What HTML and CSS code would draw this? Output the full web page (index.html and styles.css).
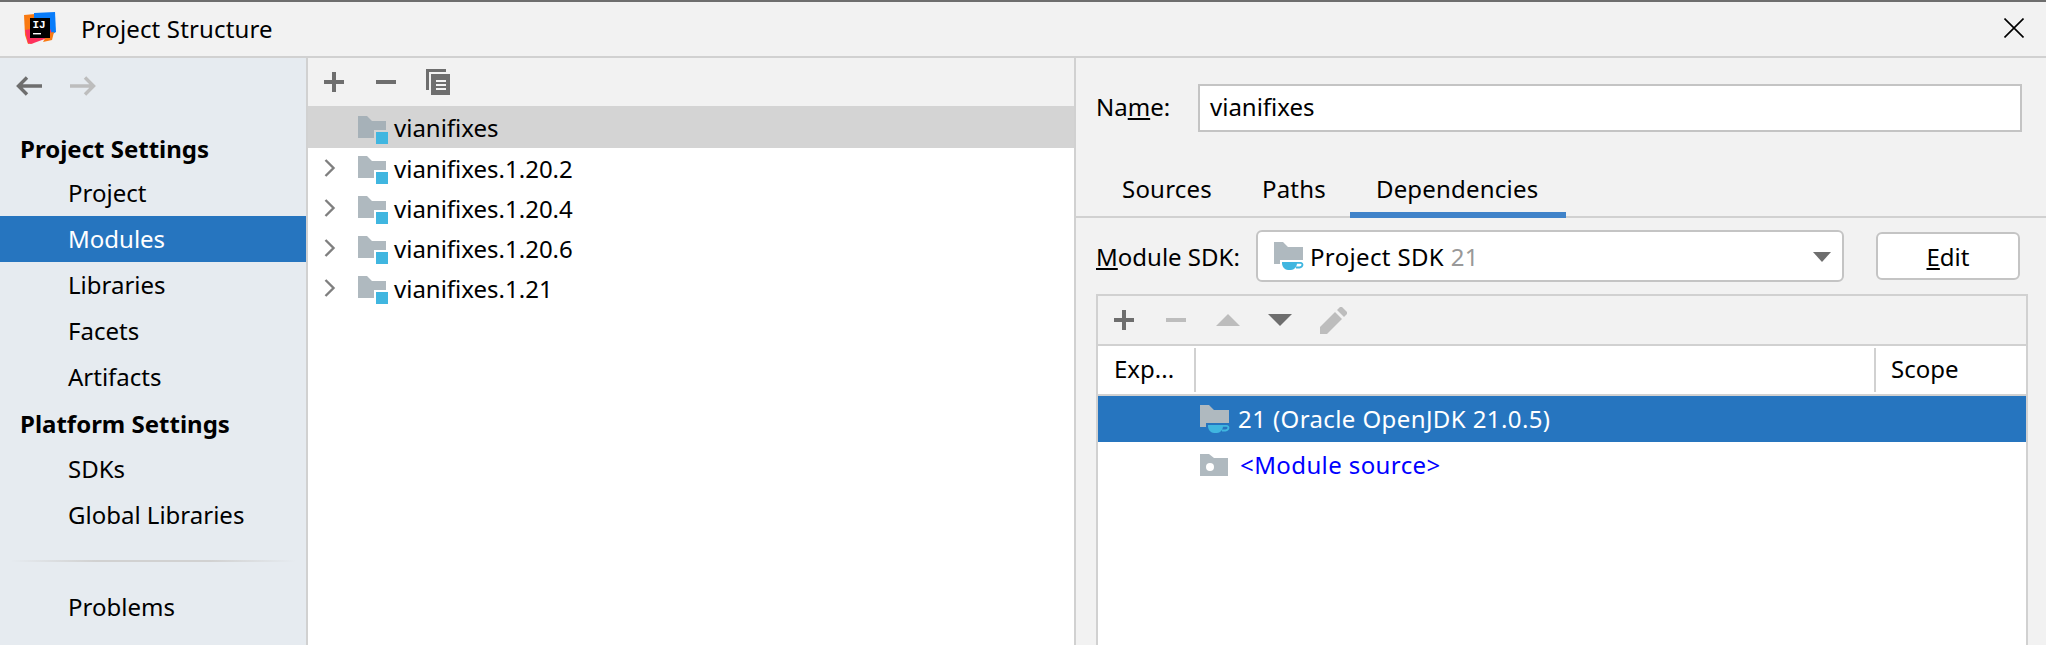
FILE: index.html
```html
<!DOCTYPE html>
<html lang="en">
<head>
<meta charset="utf-8">
<title>Project Structure</title>
<link rel="stylesheet" href="styles.css">
</head>
<body>
<svg class="defs" width="0" height="0" aria-hidden="true">
  <defs>
    <symbol id="module" viewBox="0 0 30 28">
      <path d="M0 0h9l5 5h14v9H16v8H0z"/>
      <rect x="18" y="16" width="12" height="12" fill="#40b6e0"/>
    </symbol>
    <symbol id="chevron" viewBox="0 0 12 20">
      <path d="M1.5 2l8 8-8 8" fill="none" stroke="#7f7f7f" stroke-width="2.4"/>
    </symbol>
    <symbol id="jdk" viewBox="0 0 30 28">
      <path d="M0 0h9l5 5h15v13H6v4H0z" fill="#afb9bf"/>
      <path d="M8 20h15v1c0 4-3 7-6 7h-3c-3 0-6-3-6-7z" fill="#40b6e0"/>
      <path d="M23 20.9h3.5c2.8 0 2.8 4-1 4.6h-3.5" fill="none" stroke="#40b6e0" stroke-width="1.8"/>
    </symbol>
  </defs>
</svg>
<div class="window">
  <header class="titlebar">
    <svg class="logo" width="32" height="33" viewBox="0 0 32 33">
      <path d="M0 3l11-1-1 29-6 1-3-9z" fill="#f97a12"/>
      <path d="M10 1l21-1 1 20-9 5-13-4z" fill="#087cfa"/>
      <path d="M1 18l24-4 4 10-22 8-3-1z" fill="#fe315d"/>
      <path d="M24 21l6-1-2 8-9 2z" fill="#f97a12"/>
      <rect x="6" y="6" width="20" height="20" fill="#000"/>
      <rect x="9" y="21" width="8" height="1.4" fill="#fff"/>
      <text x="8.5" y="16" class="logo-text">IJ</text>
    </svg>
    <span class="title">Project Structure</span>
    <svg class="close" width="20" height="20" viewBox="0 0 20 20"><path d="M0.5 0.5l19 19M19.5 0.5l-19 19" stroke="#000" stroke-width="1.6" fill="none"/></svg>
  </header>
  <main class="body">
    <aside class="sidebar">
      <div class="nav">
        <svg width="26" height="20" viewBox="0 0 26 20"><path d="M26 10H4M11 1.5L2.5 10l8.5 8.5" fill="none" stroke="#6e6e6e" stroke-width="3.4"/></svg>
        <svg width="26" height="20" viewBox="0 0 26 20"><path d="M0 10h22M15 1.5l8.5 8.5-8.5 8.5" fill="none" stroke="#bdbdbd" stroke-width="3.4"/></svg>
      </div>
      <div class="side-head">Project Settings</div>
      <div class="side-item">Project</div>
      <div class="side-item selected">Modules</div>
      <div class="side-item">Libraries</div>
      <div class="side-item">Facets</div>
      <div class="side-item">Artifacts</div>
      <div class="side-head platform">Platform Settings</div>
      <div class="side-item">SDKs</div>
      <div class="side-item">Global Libraries</div>
      <div class="side-divider"></div>
      <div class="side-item">Problems</div>
    </aside>
    <section class="modules">
      <div class="toolbar mod-toolbar">
        <svg width="20" height="20" viewBox="0 0 20 20"><path d="M0 10h20M10 0v20" stroke="#6e6e6e" stroke-width="4"/></svg>
        <svg width="20" height="20" viewBox="0 0 20 20"><path d="M0 10h20" stroke="#6e6e6e" stroke-width="4"/></svg>
        <svg class="copy-icon" width="24" height="26" viewBox="0 0 24 26"><path d="M0 0h20v3H3v18H0z" fill="#6e6e6e"/><path d="M5 5h19v21H5z" fill="#6e6e6e"/><path d="M10 11h10v2H10zM10 15h10v2H10zM10 19h10v2H10z" fill="#f2f2f2"/></svg>
      </div>
      <div class="tree">
        <div class="tree-row current">
          <span class="chev"></span>
          <svg class="mod-icon" width="30" height="28"><use href="#module" fill="#a6b1b8"/></svg>
          <span>vianifixes</span>
        </div>
        <div class="tree-row">
          <svg class="chev" width="12" height="20"><use href="#chevron"/></svg>
          <svg class="mod-icon" width="30" height="28"><use href="#module" fill="#afb9bf"/></svg>
          <span>vianifixes.1.20.2</span>
        </div>
        <div class="tree-row">
          <svg class="chev" width="12" height="20"><use href="#chevron"/></svg>
          <svg class="mod-icon" width="30" height="28"><use href="#module" fill="#afb9bf"/></svg>
          <span>vianifixes.1.20.4</span>
        </div>
        <div class="tree-row">
          <svg class="chev" width="12" height="20"><use href="#chevron"/></svg>
          <svg class="mod-icon" width="30" height="28"><use href="#module" fill="#afb9bf"/></svg>
          <span>vianifixes.1.20.6</span>
        </div>
        <div class="tree-row">
          <svg class="chev" width="12" height="20"><use href="#chevron"/></svg>
          <svg class="mod-icon" width="30" height="28"><use href="#module" fill="#afb9bf"/></svg>
          <span>vianifixes.1.21</span>
        </div>
      </div>
    </section>
    <section class="details">
      <div class="name-row">
        <label class="name-label">Na<u>m</u>e:</label>
        <div class="name-input">vianifixes</div>
      </div>
      <div class="tabs">
        <span class="tab">Sources</span>
        <span class="tab">Paths</span>
        <span class="tab active">Dependencies</span>
      </div>
      <div class="sdk-row">
        <label class="sdk-label"><u>M</u>odule SDK:</label>
        <div class="combo">
          <svg width="30" height="28"><use href="#jdk"/></svg>
          <span class="combo-text">Project SDK <em class="dim">21</em></span>
          <span class="caret"></span>
        </div>
        <button class="edit-btn" type="button"><u>E</u>dit</button>
      </div>
      <div class="dep-panel">
        <div class="toolbar dep-toolbar">
          <svg width="20" height="20" viewBox="0 0 20 20"><path d="M0 10h20M10 0v20" stroke="#6e6e6e" stroke-width="4"/></svg>
          <svg class="dep-minus" width="20" height="20" viewBox="0 0 20 20"><path d="M0 10h20" stroke="#bdbdbd" stroke-width="4"/></svg>
          <svg class="dep-up" width="24" height="12" viewBox="0 0 24 12"><path d="M12 0l12 12H0z" fill="#bdbdbd"/></svg>
          <svg width="24" height="12" viewBox="0 0 24 12"><path d="M0 0h24L12 12z" fill="#6e6e6e"/></svg>
          <svg width="27" height="27" viewBox="0 0 27 27"><path d="M0 27v-7L15 5l7 7L7 27z" fill="#bdbdbd"/><path d="M17 3l3-3 2 0 5 5 0 2-3 3z" fill="#bdbdbd"/></svg>
        </div>
        <div class="dep-head">
          <div class="col-exp">Exp...</div>
          <div class="col-main"></div>
          <div class="col-scope">Scope</div>
        </div>
        <div class="dep-row selected">
          <svg width="30" height="28"><use href="#jdk"/></svg>
          <span class="dep-text">21 (Oracle OpenJDK 21.0.5)</span>
        </div>
        <div class="dep-row source">
          <svg width="28" height="22" viewBox="0 0 28 22"><path d="M0 0h9l5 4h14v18H0z" fill="#afb9bf"/><circle cx="10" cy="13" r="4" fill="#fff"/></svg>
          <span class="dep-text link">&lt;Module source&gt;</span>
        </div>
      </div>
    </section>
  </main>
</div>
</body>
</html>
```
FILE: styles.css
```css
* { box-sizing: border-box; }
html, body { margin: 0; height: 100%; overflow: hidden; }
body { background: #f2f2f2; color: #000; font-family: "Noto Sans", "Open Sans", sans-serif; font-size: 24px; }
.defs { position: absolute; }
svg { display: block; flex: none; }
.window { height: 645px; display: flex; flex-direction: column; border-top: 2px solid #6e6e6e; }
.titlebar { height: 56px; flex: none; display: flex; align-items: center; background: #f2f2f2; border-bottom: 2px solid #d1d1d1; padding: 0 22px 2px 24px; }
.logo { margin-right: 25px; }
.logo-text { font-size: 11px; font-weight: 700; fill: #fff; font-family: "Liberation Mono", monospace; }
.title { flex: 1; letter-spacing: 0.15px; }
.body { flex: 1; display: flex; min-height: 0; }
.sidebar { width: 308px; flex: none; background: #e6ebf0; border-right: 2px solid #d1d1d1; }
.nav { height: 68px; display: flex; align-items: center; gap: 28px; padding: 0 0 12px 16px; }
.side-head { height: 44px; padding: 0 0 0 20px; display: flex; align-items: center; font-weight: 700; }
.side-head.platform { height: 46px; }
.side-item { height: 46px; display: flex; align-items: center; padding: 0 0 2px 68px; }
.side-item.selected { background: #2675bf; color: #fff; }
.side-divider { height: 2px; margin: 22px 10px; background: linear-gradient(90deg, #e6ebf0, #d1d1d1 30%, #d1d1d1 70%, #e6ebf0); }
.modules { width: 768px; flex: none; display: flex; flex-direction: column; border-right: 2px solid #d1d1d1; }
.toolbar { display: flex; align-items: center; background: #f2f2f2; }
.mod-toolbar { height: 48px; padding-left: 16px; gap: 32px; }
.copy-icon { margin-left: -2px; }
.tree { flex: 1; background: #fff; }
.tree-row { height: 40px; display: flex; align-items: center; padding-left: 16px; }
.tree-row.current { background: #d4d4d4; height: 42px; }
.chev { width: 12px; height: 20px; margin-right: 22px; flex: none; }
.mod-icon { margin-right: 6px; margin-top: 4px; }
.current .mod-icon { margin-top: 6px; }
.details { flex: 1; display: flex; flex-direction: column; min-width: 0; }
.name-row { height: 74px; margin-top: 26px; display: flex; align-items: flex-start; padding-left: 20px; }
.name-label { width: 102px; height: 48px; line-height: 46px; }
.name-input { width: 824px; height: 48px; background: #fff; border: 2px solid #c4c4c4; padding-left: 10px; line-height: 42px; }
.tabs { height: 60px; display: flex; align-items: flex-end; border-bottom: 2px solid #d1d1d1; padding-left: 21px; letter-spacing: 0.2px; }
.tab { height: 60px; line-height: 62px; padding: 0 25px; margin-bottom: -2px; }
.tab.active { border-bottom: 6px solid #4083c9; padding: 0 28px 0 26px; margin-left: -1px; }
.sdk-row { display: flex; align-items: center; padding: 12px 0 0 20px; height: 64px; }
.sdk-label { width: 160px; flex: none; }
.combo { width: 588px; height: 52px; flex: none; background: #fff; border: 2px solid #c4c4c4; border-radius: 6px; display: flex; align-items: center; gap: 6px; padding-left: 16px; position: relative; }
.combo-text { letter-spacing: 0.35px; }
.dim { color: #999; font-style: normal; }
.caret { position: absolute; right: 11px; top: 20px; border: 9px solid transparent; border-top: 10px solid #6e6e6e; border-bottom: 0; }
.edit-btn { width: 144px; height: 48px; flex: none; margin-left: 32px; background: #fff; border: 2px solid #c4c4c4; border-radius: 6px; font: inherit; color: inherit; padding: 0; }
.dep-panel { margin: 12px 18px 0 20px; flex: 1; border: 2px solid #d1d1d1; border-bottom: 0; display: flex; flex-direction: column; background: #fff; }
.dep-toolbar { height: 50px; flex: none; padding-left: 16px; gap: 28px; border-bottom: 2px solid #d1d1d1; }
.dep-minus { margin-left: 4px; }
.dep-up { margin-left: 2px; }
.dep-head { height: 50px; flex: none; display: flex; border-bottom: 2px solid #d1d1d1; background: #fff; padding-top: 2px; }
.col-exp { width: 98px; padding-left: 16px; line-height: 42px; border-right: 2px solid #d1d1d1; height: 44px; }
.col-main { flex: 1; height: 44px; border-right: 2px solid #d1d1d1; }
.col-scope { width: 150px; padding-left: 15px; line-height: 42px; }
.dep-row { height: 46px; flex: none; display: flex; align-items: center; padding-left: 102px; gap: 8px; }
.dep-text { letter-spacing: 0.4px; padding-bottom: 2px; }
.dep-row.selected { background: #2675bf; color: #fff; }
.dep-row.source { gap: 12px; }
.link { color: #0000ff; }
```
